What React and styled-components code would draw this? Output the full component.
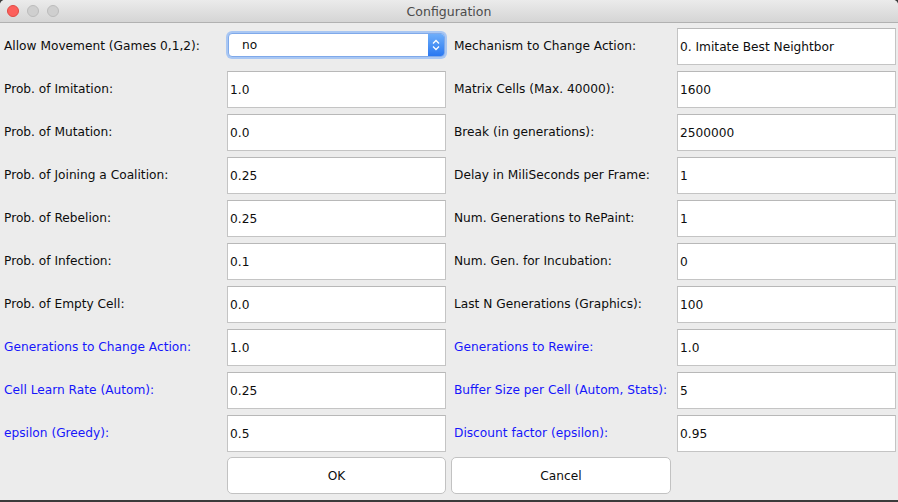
import React from 'react';
import styled, { createGlobalStyle } from 'styled-components';

const GlobalStyle = createGlobalStyle`
  html, body {
    margin: 0;
    padding: 0;
    background: #3b3b3b;
  }
  * {
    box-sizing: border-box;
  }
`;

const fontStack = '"DejaVu Sans", "Liberation Sans", sans-serif';

const Window = styled.div`
  width: 898px;
  height: 500px;
  background: #ececec;
  display: flex;
  flex-direction: column;
  border-radius: 5px 5px 0 0;
  overflow: hidden;
  font-family: ${fontStack};
`;

const TitleBar = styled.div`
  height: 23px;
  flex: none;
  display: flex;
  align-items: center;
  position: relative;
  background: linear-gradient(#ebebeb, #d5d5d5);
  border-bottom: 1px solid #b1b1b1;
  padding-left: 7px;
  gap: 8px;
`;

const Light = styled.span`
  width: 12px;
  height: 12px;
  border-radius: 50%;
  background: ${(p) => (p.$red ? '#fc605c' : '#cfcfcf')};
  border: 1px solid ${(p) => (p.$red ? '#de4a44' : '#bbbbbb')};
`;

const Title = styled.div`
  position: absolute;
  left: 0;
  right: 0;
  top: 0;
  bottom: 0;
  display: flex;
  align-items: center;
  justify-content: center;
  font-size: 12.5px;
  color: #4b4b4b;
  pointer-events: none;
`;

const Grid = styled.div`
  display: grid;
  grid-template-columns: 227px 219px 231px 219px;
  grid-auto-rows: 43px;
  padding-top: 1px;
`;

const Label = styled.div`
  display: flex;
  align-items: center;
  padding-left: ${(p) => (p.$right ? '8px' : '4px')};
  font-size: 12.2px;
  color: ${(p) => (p.$blue ? '#1616fb' : '#0d0d0d')};
  white-space: nowrap;
`;

const FieldCell = styled.div`
  padding: 4px 0 2px;
  display: flex;
`;

const Field = styled.div`
  flex: 1;
  background: #fff;
  border: 1px solid #c4c4c4;
  border-top-color: #b8b8b8;
  display: flex;
  align-items: center;
  padding-left: 2px;
  font-size: 12.2px;
  color: #0d0d0d;
`;

const ComboCell = styled.div`
  padding: 9px 1px 0 1px;
`;

const Combo = styled.div`
  height: 24px;
  display: flex;
  align-items: stretch;
  border-radius: 4px;
  background: #fff;
  border: 1px solid #7fa9ea;
  box-shadow: 0 0 0 2px #a9c7f3;
  overflow: hidden;
`;

const ComboText = styled.div`
  flex: 1;
  display: flex;
  align-items: center;
  padding-left: 13px;
  font-size: 12.2px;
  color: #0d0d0d;
`;

const Stepper = styled.div`
  width: 16px;
  background: linear-gradient(#6eaefa, #2a78f1);
  display: flex;
  align-items: center;
  justify-content: center;
`;

const ButtonCell = styled.div`
  padding: 3px 0 3px ${(p) => (p.$shift ? '5px' : '0')};
  display: flex;
`;

const Button = styled.div`
  width: ${(p) => (p.$shift ? '220px' : '100%')};
  background: #fff;
  border: 1px solid #c2c2c2;
  border-radius: 5px;
  display: flex;
  align-items: center;
  justify-content: center;
  font-size: 12.2px;
  color: #0d0d0d;
`;

const rows = [
  ['Prob. of Imitation:', '1.0', 'Matrix Cells (Max. 40000):', '1600'],
  ['Prob. of Mutation:', '0.0', 'Break (in generations):', '2500000'],
  ['Prob. of Joining a Coalition:', '0.25', 'Delay in MiliSeconds per Frame:', '1'],
  ['Prob. of Rebelion:', '0.25', 'Num. Generations to RePaint:', '1'],
  ['Prob. of Infection:', '0.1', 'Num. Gen. for Incubation:', '0'],
  ['Prob. of Empty Cell:', '0.0', 'Last N Generations (Graphics):', '100'],
  ['Generations to Change Action:', '1.0', 'Generations to Rewire:', '1.0', true],
  ['Cell Learn Rate (Autom):', '0.25', 'Buffer Size per Cell (Autom, Stats):', '5', true],
  ['epsilon (Greedy):', '0.5', 'Discount factor (epsilon):', '0.95', true],
];

export default function App() {
  return (
    <>
      <GlobalStyle />
      <Window>
        <TitleBar>
          <Light $red />
          <Light />
          <Light />
          <Title>Configuration</Title>
        </TitleBar>
        <Grid>
          <Label>Allow Movement (Games 0,1,2):</Label>
          <ComboCell>
            <Combo>
              <ComboText>no</ComboText>
              <Stepper>
                <svg width="8" height="12" viewBox="0 0 8 12">
                  <path d="M1 4.5 L4 1.5 L7 4.5 M1 7.5 L4 10.5 L7 7.5" fill="none" stroke="#fff" strokeWidth="1.3" />
                </svg>
              </Stepper>
            </Combo>
          </ComboCell>
          <Label $right>Mechanism to Change Action:</Label>
          <FieldCell>
            <Field>0. Imitate Best Neightbor</Field>
          </FieldCell>

          {rows.map(([l1, v1, l2, v2, blue]) => (
            <React.Fragment key={l1}>
              <Label $blue={blue}>{l1}</Label>
              <FieldCell>
                <Field>{v1}</Field>
              </FieldCell>
              <Label $blue={blue} $right>{l2}</Label>
              <FieldCell>
                <Field>{v2}</Field>
              </FieldCell>
            </React.Fragment>
          ))}

          <div />
          <ButtonCell>
            <Button>OK</Button>
          </ButtonCell>
          <ButtonCell $shift>
            <Button $shift>Cancel</Button>
          </ButtonCell>
          <div />
        </Grid>
      </Window>
    </>
  );
}
